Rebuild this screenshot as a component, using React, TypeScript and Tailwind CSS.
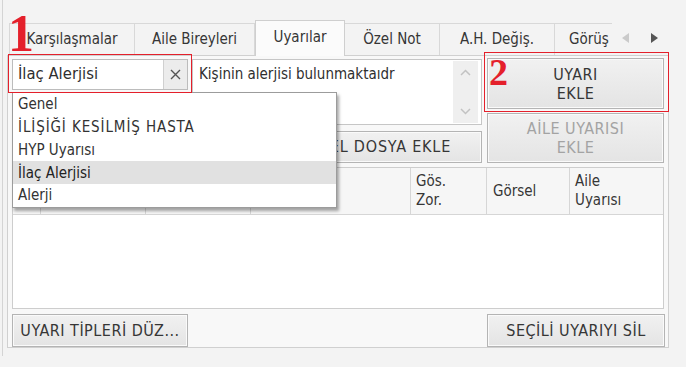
import React from 'react';

const tabs = [
  { label: 'Karşılaşmalar', w: 'w-[126px]' },
  { label: 'Aile Bireyleri', w: 'w-[120px]' },
  { label: 'Uyarılar', w: 'w-[90px]', active: true },
  { label: 'Özel Not', w: 'w-[95px]' },
  { label: 'A.H. Değiş.', w: 'w-[115px]' },
  { label: 'Görüş', w: 'w-[57px]', clipped: true },
];

const options = ['Genel', 'İLİŞİĞİ KESİLMİŞ HASTA', 'HYP Uyarısı', 'İlaç Alerjisi', 'Alerji'];

const btn =
  'border border-[#b4b4b4] bg-gradient-to-b from-[#f1f1f1] to-[#e4e4e4] shadow-[inset_0_0_0_1px_#fafafa] flex items-center justify-center text-center text-[16px] tracking-[0.5px] whitespace-nowrap';

function Tab({ label, w, active, clipped }: { label: string; w: string; active?: boolean; clipped?: boolean }) {
  if (active) {
    return (
      <div
        className={`${w} h-[36px] -mb-[1px] bg-[#fbfbfb] border border-b-0 border-[#cfcfcf] flex items-center justify-center pb-[3px] relative z-10`}
      >
        {label}
      </div>
    );
  }
  return (
    <div
      className={`${w} h-[32px] border-t border-r border-[#d8d8d8] ${
        label === 'Karşılaşmalar' ? 'border-l' : ''
      } ${clipped ? 'border-r-0 overflow-hidden justify-start pl-[14px]' : 'justify-center'} flex items-center whitespace-nowrap`}
    >
      {label}
    </div>
  );
}

export default function App() {
  return (
    <div className="w-[686px] h-[367px] bg-[#f3f3f3] relative overflow-hidden font-['DejaVu_Sans_Condensed','DejaVu_Sans',sans-serif] text-[15px] text-[#363636] pl-[2px]">
      <div className="h-[356px] border-l border-[#d4d4d4] pl-[4px] pt-[20px]">
        {/* sekmeler */}
        <div className="flex items-end h-[35px] pl-[2px]">
          {tabs.map((t) => (
            <Tab key={t.label} {...t} />
          ))}
          <div className="flex items-center gap-[22px] pl-[10px] h-[32px] pb-[2px]">
            <svg width="7" height="10" viewBox="0 0 7 10">
              <path d="M7 0 L0 5 L7 10 Z" fill="#cacaca" />
            </svg>
            <svg width="7" height="10" viewBox="0 0 7 10">
              <path d="M0 0 L7 5 L0 10 Z" fill="#555" />
            </svg>
          </div>
        </div>

        {/* panel */}
        <div className="w-[662px] h-[293px] border border-[#d0d0d0] bg-[#f8f8f8] pl-[4px] pt-[1px] flex flex-col">
          <div className="flex items-start">
            <div className="w-[176px] mt-[2px] h-[31px] bg-white border border-[#bcbcbc] flex">
              <div className="flex-1 flex items-center pl-[5px] text-[16.5px] text-[#2f2f2f]">İlaç Alerjisi</div>
              <div className="w-[24px] bg-[#ececec] border-l border-[#d0d0d0] flex items-center justify-center">
                <svg width="11" height="11" viewBox="0 0 11 11">
                  <path d="M1 1 L10 10 M10 1 L1 10" stroke="#555" strokeWidth="1.4" />
                </svg>
              </div>
            </div>

            <div className="w-[290px] ml-[4px] mt-[2px] flex flex-col">
              <div className="h-[66px] bg-white border border-[#c6c6c6] flex">
                <div className="flex-1 pl-[6px] pt-[3px] text-[15px] text-[#2f2f2f]">Kişinin alerjisi bulunmaktaıdr</div>
                <div className="w-[25px] my-[1px] mr-[3px] bg-[#efefef] flex flex-col items-center justify-between py-[8px]">
                  <svg width="11" height="7" viewBox="0 0 11 7">
                    <path d="M1 6 L5.5 1.5 L10 6" stroke="#c2c2c2" strokeWidth="1.5" fill="none" />
                  </svg>
                  <svg width="11" height="7" viewBox="0 0 11 7">
                    <path d="M1 1 L5.5 5.5 L10 1" stroke="#c2c2c2" strokeWidth="1.5" fill="none" />
                  </svg>
                </div>
              </div>
              <div className={`${btn} h-[32px] mt-[6px] pl-[62px] tracking-[0.8px]`}>GÖRSEL DOSYA EKLE</div>
            </div>

            <div className="w-[177px] ml-[5px] mt-[1px] flex flex-col gap-[4px]">
              <div className={`${btn} h-[51px] leading-[19px]`}>
                UYARI
                <br />
                EKLE
              </div>
              <div className={`${btn} h-[50px] leading-[19px] text-[#a3a3a3]`}>
                AİLE UYARISI
                <br />
                EKLE
              </div>
            </div>
          </div>

          {/* tablo */}
          <div className="w-[652px] h-[142px] mt-[4px] border border-[#cdcdcd] bg-white flex flex-col">
            <div className="h-[47px] bg-[#f6f6f6] border-b border-[#d6d6d6] flex text-[15px] leading-[19px]">
              <div className="w-[28px] border-r border-[#d6d6d6]" />
              <div className="w-[105px] border-r border-[#d6d6d6]" />
              <div className="w-[105px] border-r border-[#d6d6d6]" />
              <div className="w-[160px] border-r border-[#d6d6d6]" />
              <div className="w-[76px] border-r border-[#d6d6d6] pl-[5px] pt-[4px]">
                Gös.
                <br />
                Zor.
              </div>
              <div className="w-[83px] border-r border-[#d6d6d6] pl-[6px] flex items-center">Görsel</div>
              <div className="flex-1 pl-[5px] pt-[4px]">
                Aile
                <br />
                Uyarısı
              </div>
            </div>
          </div>

          <div className="flex justify-between w-[653px] mt-[5px]">
            <div className={`${btn} w-[176px] h-[33px] tracking-[0.2px]`}>UYARI TİPLERİ DÜZ...</div>
            <div className={`${btn} w-[178px] h-[33px]`}>SEÇİLİ UYARIYI SİL</div>
          </div>
        </div>
      </div>

      {/* açılır liste */}
      <div className="absolute left-[12px] top-[92px] w-[325px] h-[116px] bg-white border border-[#9c9c9c] shadow-[2px_3px_3px_rgba(0,0,0,0.35)] flex flex-col text-[15px] text-[#333]">
        {options.map((o) => (
          <div
            key={o}
            className={`h-[23px] flex items-center pl-[5px] ${o === 'İlaç Alerjisi' ? 'bg-[#e1e1e1] text-[#222]' : ''} ${
              o === 'İLİŞİĞİ KESİLMİŞ HASTA' ? 'tracking-[0.9px]' : ''
            }`}
          >
            {o}
          </div>
        ))}
      </div>

      {/* işaretler */}
      <div className="absolute left-[8px] top-[54px] w-[184px] h-[39px] border-[1.5px] border-[#e4202b]" />
      <div className="absolute left-[484px] top-[52px] w-[185px] h-[60px] border-[1.5px] border-[#e4202b]" />
      <div className="absolute left-[8px] top-[8px] font-['Liberation_Serif',serif] font-bold text-[52px] leading-[52px] text-[#e4202b]">
        1
      </div>
      <div className="absolute left-[489px] top-[52px] font-['Liberation_Serif',serif] font-bold text-[38px] leading-[40px] text-[#e4202b]">
        2
      </div>
    </div>
  );
}
